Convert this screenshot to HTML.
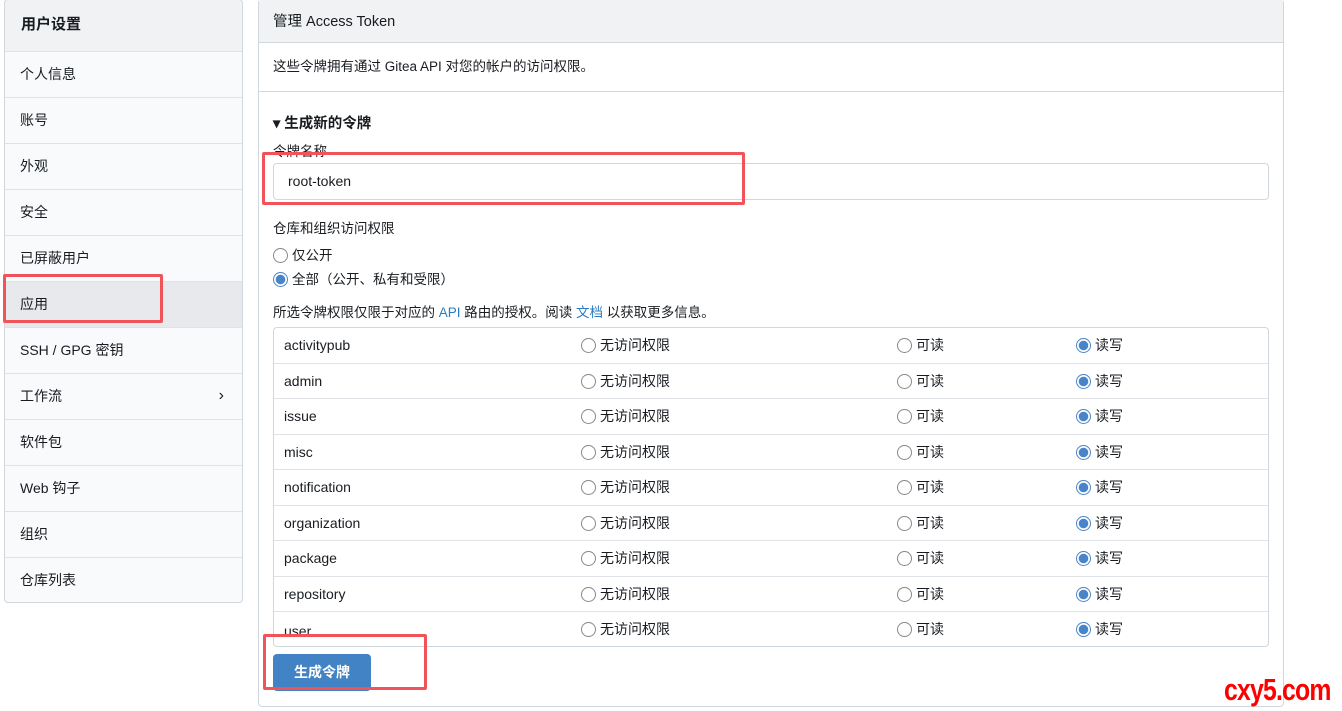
<!DOCTYPE html>
<html><head><meta charset="utf-8"><style>
*{box-sizing:border-box;margin:0;padding:0}
body{width:1342px;height:711px;background:#fff;font-family:"Liberation Sans","Noto Sans CJK SC",sans-serif;font-size:14px;color:#181c21;position:relative;overflow:hidden}
.a{position:absolute}
.side{left:4px;top:-1px;width:239px;height:604px;border:1px solid #d0d7de;border-radius:4px;background:#f9fafb;overflow:hidden}
.side div{height:46px;border-top:1px solid #dfe3e8;padding-left:15px;line-height:44px}
.side div.h{height:51px;border-top:none;background:#f1f2f4;font-weight:bold;font-size:15px;line-height:50px;padding-left:16px}
.side div.act{background:#e8e9ec}
.main{left:258px;top:-1px;width:1026px;height:708px;border:1px solid #d0d7de;border-radius:4px}
.mh{height:43px;background:#f1f2f4;border-bottom:1px solid #d0d7de;padding-left:14px;line-height:44px;font-size:14.5px}
.md{height:49px;border-bottom:1px solid #d0d7de;padding-left:14px;line-height:48px;font-size:13.5px}
.rad{display:inline-block;width:15px;height:15px;border:1px solid #888;border-radius:50%;vertical-align:-3px;margin-right:4px;background:#fff}
.rad.on{border-color:#4a84c8;background:radial-gradient(circle,#4a84c8 0 4.5px,#fff 5px)}
.tbl{left:273px;top:327px;width:996px;height:320px;border:1px solid #d0d7de;border-radius:4px;overflow:hidden}
.tbl .r{position:absolute;left:0;right:0;height:35.5px;border-top:1px solid #dfe3e8;line-height:34px}
.r span{position:absolute}
.red{border:3px solid #f0545a;border-radius:2px}
</style></head><body>
<div class="a side">
<div class="h">用户设置</div>
<div>个人信息</div><div>账号</div><div>外观</div><div>安全</div><div>已屏蔽用户</div>
<div class="act">应用</div><div>SSH / GPG 密钥</div>
<div>工作流<span style="float:right;margin-right:18px;font-size:16px">›</span></div>
<div>软件包</div><div>Web 钩子</div><div>组织</div><div>仓库列表</div>
</div>
<div class="a main">
<div class="mh">管理 Access Token</div>
<div class="md">这些令牌拥有通过 Gitea API 对您的帐户的访问权限。</div>
</div>
<div class="a" style="left:273px;top:112px;font-weight:bold;font-size:14.5px">▾ 生成新的令牌</div>
<div class="a" style="left:273px;top:140px;font-size:13.5px">令牌名称</div>
<div class="a" style="left:273px;top:163px;width:996px;height:37px;border:1px solid #d0d7de;border-radius:4px;background:#fff;padding-left:14px;line-height:35px">root-token</div>
<div class="a" style="left:273px;top:217px;font-size:13.5px">仓库和组织访问权限</div>
<div class="a" style="left:273px;top:244px;font-size:13.5px"><span class="rad"></span>仅公开</div>
<div class="a" style="left:273px;top:268px;font-size:13.5px"><span class="rad on"></span>全部（公开、私有和受限）</div>
<div class="a" style="left:273px;top:301px;font-size:13.5px">所选令牌权限仅限于对应的 <span style="color:#2a7bc2">API</span> 路由的授权。阅读 <span style="color:#2a7bc2">文档</span> 以获取更多信息。</div>
<div class="a tbl">
<div class="r" style="top:-1px"><span style="left:10px">activitypub</span><span style="left:307px"><i class="rad"></i>无访问权限</span><span style="left:623px"><i class="rad"></i>可读</span><span style="left:802px"><i class="rad on"></i>读写</span></div>
<div class="r" style="top:34.5px"><span style="left:10px">admin</span><span style="left:307px"><i class="rad"></i>无访问权限</span><span style="left:623px"><i class="rad"></i>可读</span><span style="left:802px"><i class="rad on"></i>读写</span></div>
<div class="r" style="top:70px"><span style="left:10px">issue</span><span style="left:307px"><i class="rad"></i>无访问权限</span><span style="left:623px"><i class="rad"></i>可读</span><span style="left:802px"><i class="rad on"></i>读写</span></div>
<div class="r" style="top:105.5px"><span style="left:10px">misc</span><span style="left:307px"><i class="rad"></i>无访问权限</span><span style="left:623px"><i class="rad"></i>可读</span><span style="left:802px"><i class="rad on"></i>读写</span></div>
<div class="r" style="top:141px"><span style="left:10px">notification</span><span style="left:307px"><i class="rad"></i>无访问权限</span><span style="left:623px"><i class="rad"></i>可读</span><span style="left:802px"><i class="rad on"></i>读写</span></div>
<div class="r" style="top:176.5px"><span style="left:10px">organization</span><span style="left:307px"><i class="rad"></i>无访问权限</span><span style="left:623px"><i class="rad"></i>可读</span><span style="left:802px"><i class="rad on"></i>读写</span></div>
<div class="r" style="top:212px"><span style="left:10px">package</span><span style="left:307px"><i class="rad"></i>无访问权限</span><span style="left:623px"><i class="rad"></i>可读</span><span style="left:802px"><i class="rad on"></i>读写</span></div>
<div class="r" style="top:247.5px"><span style="left:10px">repository</span><span style="left:307px"><i class="rad"></i>无访问权限</span><span style="left:623px"><i class="rad"></i>可读</span><span style="left:802px"><i class="rad on"></i>读写</span></div>
<div class="r" style="top:283px"><span style="left:10px;top:2px">user</span><span style="left:307px"><i class="rad"></i>无访问权限</span><span style="left:623px"><i class="rad"></i>可读</span><span style="left:802px"><i class="rad on"></i>读写</span></div>
</div>
<div class="a" style="left:273px;top:654px;width:98px;height:37px;background:#4183c4;border-radius:4px;color:#fff;font-weight:bold;text-align:center;line-height:37px;font-size:14px">生成令牌</div>
<div class="a red" style="left:262px;top:152px;width:483px;height:53px"></div>
<div class="a red" style="left:3px;top:274px;width:160px;height:49px"></div>
<div class="a red" style="left:263px;top:634px;width:164px;height:56px"></div>
<div class="a" style="left:1224px;top:672px;color:#f00;font-weight:bold;font-size:31px;font-family:'Liberation Sans',sans-serif;letter-spacing:-1px;transform:scaleX(0.8);transform-origin:left;white-space:nowrap">cxy5.com</div>
</body></html>
